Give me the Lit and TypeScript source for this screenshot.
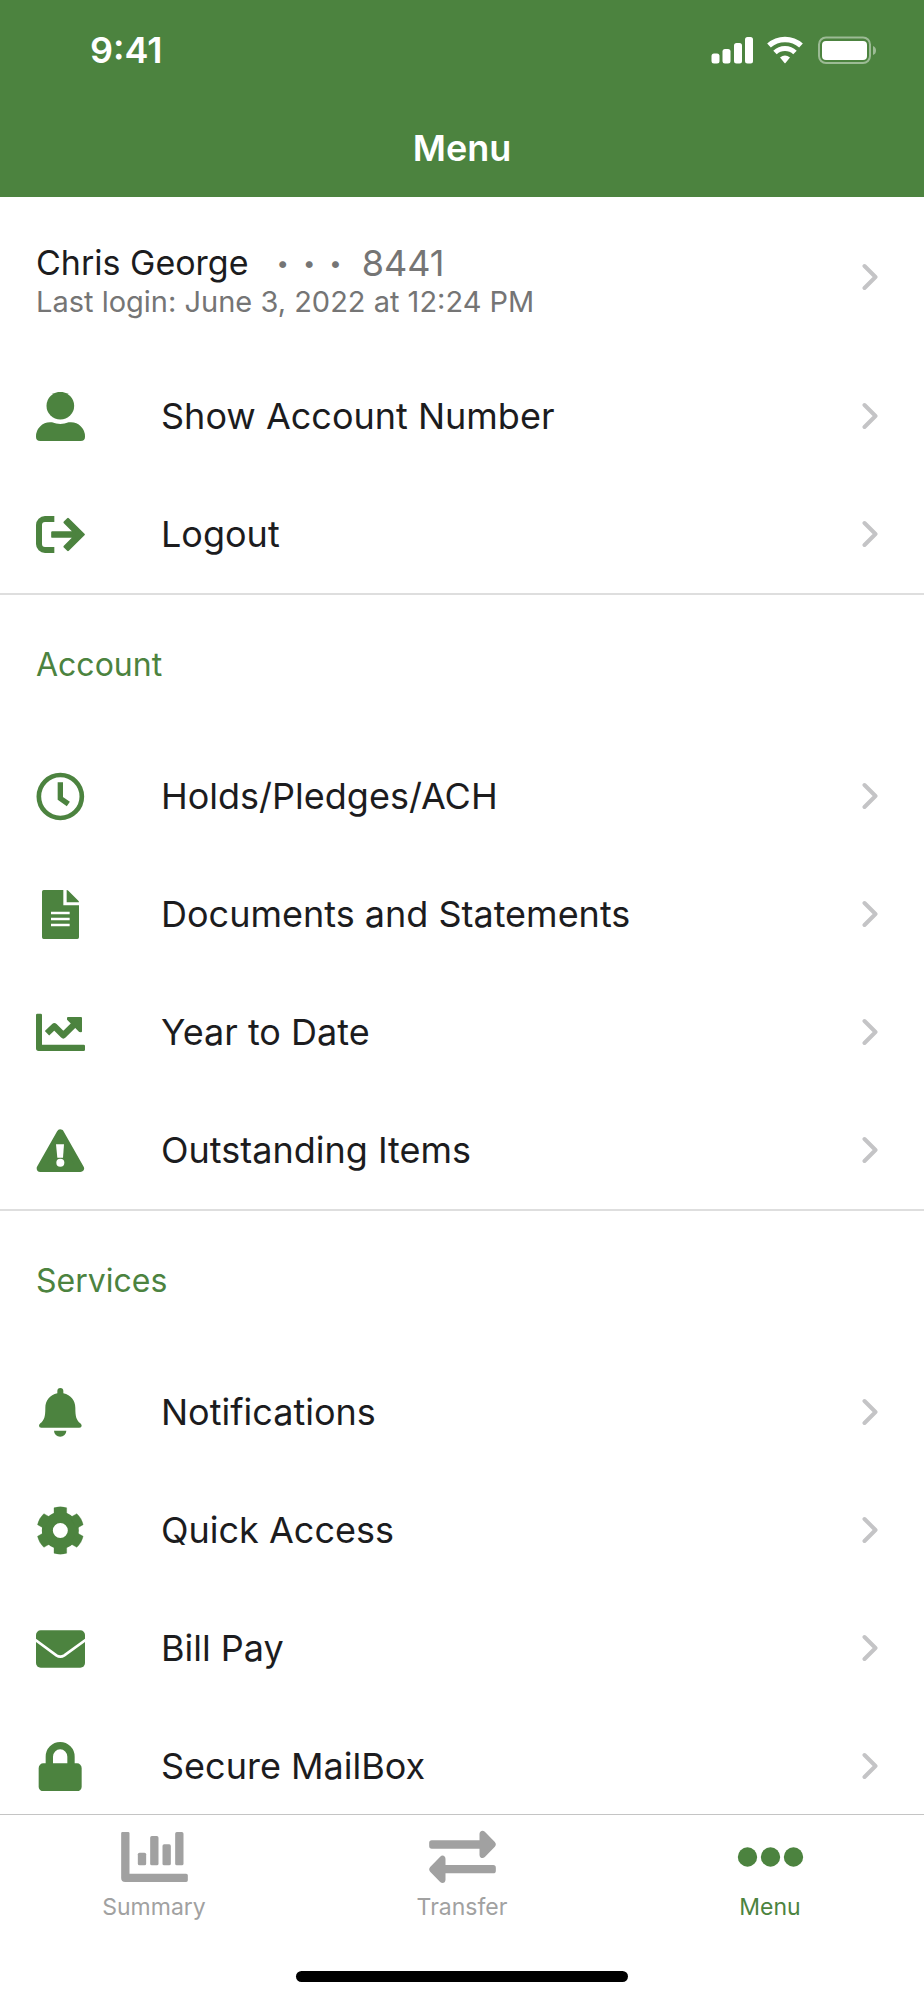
import { LitElement, html, svg, css, type SVGTemplateResult } from "lit";
import { customElement, property } from "lit/decorators.js";

const ARROW = "M8 31H151V12C151 3 160 -1 167 5L197 36Q203 43 197 50L167 81C160 88 151 83 151 74V56H8Q0 56 0 48V39Q0 31 8 31Z";

const ICONS: Record<string, SVGTemplateResult> = {
  user: svg`<circle cx="73" cy="41" r="41.5"/><path d="M42 91H48Q73 101 98 91H105A42 42 0 0 1 147 133V135Q147 147 134 147H13Q0 147 0 135V133A42 42 0 0 1 42 91Z"/>`,
  logout: svg`<path d="M55 27H27A18 18 0 0 0 9 45V102A18 18 0 0 0 27 120H55" fill="none" stroke="currentColor" stroke-width="18"/><path d="M96 27 143 73.500 96 120 86 110 116 80H49V67H116L86 37Z" stroke="currentColor" stroke-width="7" stroke-linejoin="round"/>`,
  clock: svg`<circle cx="73" cy="73.500" r="64.500" fill="none" stroke="currentColor" stroke-width="14"/><path d="M73 31V79L97 96" fill="none" stroke="currentColor" stroke-width="16"/>`,
  document: svg`<path d="M23 0H82V46H129V142Q129 147 124 147H23Q18 147 18 142V5Q18 0 23 0ZM45 65V73H101V65ZM45 83V91H101V83ZM45 101V109H101V101Z" fill-rule="evenodd"/><path d="M92 0Q95 0 97 2L127 32Q129 34 129 37H92Z"/>`,
  trend: svg`<path d="M0 21Q0 17 4 17H14Q18 17 18 21V110H143Q147 110 147 114V125Q147 129 143 129H8Q0 129 0 121Z"/><path d="M33 76 55 55 82 82 120 44" fill="none" stroke="currentColor" stroke-width="19" stroke-linejoin="round"/><path d="M96 30H135V70L131 69 96 34Z" stroke="currentColor" stroke-width="6" stroke-linejoin="round"/>`,
  warning: svg`<path d="M73 21 133 127H13Z" stroke="currentColor" stroke-width="22" stroke-linejoin="round"/><path d="M60 55H84L81 95H64Z" fill="#fff"/><circle cx="73" cy="110" r="12" fill="#fff"/>`,
  bell: svg`<path d="M73 0A9 9 0 0 1 82 9V16C105 21 118 38 118 60C118 85 121 97 133 106Q137 110 137 113Q137 119 130 119H16Q9 119 9 113Q9 110 13 106C25 97 28 85 28 60C28 38 41 21 64 16V9A9 9 0 0 1 73 0Z"/><path d="M54 128H91A18.500 18.500 0 0 1 54 128Z"/>`,
  gear: svg`<g transform="translate(73 73.500)"><circle r="39" fill="none" stroke="currentColor" stroke-width="33"/>${[0, 60, 120, 180, 240, 300].map(
    (a) => svg`<path transform="rotate(${a})" d="M-19 -68Q0 -74 19 -68V-45H-19Z" stroke="currentColor" stroke-width="1"/>`
  )}</g>`,
  mail: svg`<rect y="19" width="147" height="112" rx="14"/><path d="M-4 46 61 94Q73 102 85 94L151 46" fill="none" stroke="#fff" stroke-width="8"/>`,
  lock: svg`<rect x="8" y="64" width="129" height="84" rx="14"/><path d="M40 70V44A32.500 33 0 0 1 105 44V70" fill="none" stroke="currentColor" stroke-width="22"/>`,
  summary: svg`<path d="M0 10Q0 6 4 6H21Q25 6 25 10V131H195Q200 131 200 136V151Q200 156 195 156H12Q0 156 0 144Z"/><rect x="50" y="68" width="25" height="38" rx="5"/><rect x="87" y="18" width="25" height="88" rx="5"/><rect x="124" y="43" width="25" height="63" rx="5"/><rect x="162" y="6" width="25" height="100" rx="5"/>`,
  transfer: svg`<path d=${ARROW}/><path transform="rotate(180 100 80.500)" d=${ARROW}/>`,
  more: svg`<circle cx="31" cy="81" r="29"/><circle cx="100" cy="81" r="29"/><circle cx="169" cy="81" r="29"/>`,
};

const GROUPS = [
  {
    title: "Account",
    items: [
      ["clock", "Holds/Pledges/ACH"],
      ["document", "Documents and Statements"],
      ["trend", "Year to Date"],
      ["warning", "Outstanding Items"],
    ],
  },
  {
    title: "Services",
    items: [
      ["bell", "Notifications"],
      ["gear", "Quick Access"],
      ["mail", "Bill Pay"],
      ["lock", "Secure MailBox"],
    ],
  },
];

const chevron = html`<svg width="16" height="28" viewBox="0 0 16 28" fill="none" stroke="#c4c4c6" stroke-width="4" stroke-linecap="round" stroke-linejoin="round" aria-hidden="true"><path d="M2.500 3 13.500 14 2.500 25"/></svg>`;

@customElement("menu-row")
class MenuRow extends LitElement {
  @property() icon = "";
  @property() label = "";

  static styles = css`
    :host {
      display: block;
    }
    .row {
      display: flex;
      align-items: center;
      height: 118px;
      padding: 0 46px 0 36px;
      color: #1c1c1e;
      text-decoration: none;
    }
    .icon {
      width: 49px;
      height: 49px;
      margin-right: 76px;
      color: #4c833f;
      fill: currentColor;
    }
    .label {
      flex: 1;
      font-size: 36px;
      line-height: 44px;
    }
  `;

  render() {
    return html`<a class="row" href="#">
      <svg class="icon" viewBox="0 0 147 147" aria-hidden="true">${ICONS[this.icon]}</svg>
      <span class="label">${this.label}</span>
      ${chevron}
    </a>`;
  }
}

@customElement("tab-item")
class TabItem extends LitElement {
  @property() icon = "";
  @property() label = "";
  @property({ type: Boolean, reflect: true }) active = false;

  static styles = css`
    :host {
      display: block;
      flex: 1;
      color: #a1a1a1;
    }
    :host([active]) {
      color: #4c833f;
    }
    .tab {
      display: flex;
      flex-direction: column;
      align-items: center;
      gap: 9px;
      padding-top: 15px;
      color: inherit;
      text-decoration: none;
      font-size: 23px;
      line-height: 28px;
    }
    .icon {
      width: 67px;
      height: 54px;
      fill: currentColor;
    }
  `;

  render() {
    return html`<a class="tab" href="#">
      <svg class="icon" viewBox="0 0 200 162" aria-hidden="true">${ICONS[this.icon]}</svg>
      <span>${this.label}</span>
    </a>`;
  }
}

@customElement("app-root")
class AppRoot extends LitElement {
  static styles = css`
    :host {
      display: flex;
      flex-direction: column;
      height: 100vh;
      background: #fff;
      color: #1c1c1e;
      font-family: Inter, "Liberation Sans", sans-serif;
    }
    .header {
      background: #4c833f;
      color: #fff;
    }
    .status {
      display: flex;
      align-items: center;
      justify-content: space-between;
      height: 100px;
      padding: 0 48px 0 90px;
    }
    .time {
      font-size: 36px;
      font-weight: 600;
    }
    .title {
      margin: 0;
      padding: 26px 0 27px;
      font-size: 36px;
      font-weight: 600;
      line-height: 44px;
      text-align: center;
    }
    .content {
      flex: 1;
      min-height: 0;
      overflow-y: auto;
      scrollbar-width: none;
    }
    .profile {
      display: flex;
      align-items: center;
      justify-content: space-between;
      height: 160px;
      padding: 0 46px 0 36px;
      color: inherit;
      text-decoration: none;
    }
    .summary {
      padding-top: 8px;
    }
    .who {
      display: flex;
      align-items: center;
      font-size: 34px;
      line-height: 42px;
    }
    .dots {
      display: flex;
      gap: 14px;
      margin: 0 20px 0 28px;
      color: #757575;
      font-size: 22px;
    }
    .digits {
      color: #757575;
      font-size: 36px;
    }
    .login {
      color: #757575;
      font-size: 29px;
      line-height: 36px;
    }
    .group {
      border-top: 2px solid #dedede;
    }
    .heading {
      margin: 0;
      padding: 48px 36px 50px;
      color: #4c833f;
      font-size: 32px;
      font-weight: 400;
      line-height: 44px;
    }
    .footer {
      border-top: 1px solid #c4c4c4;
      background: #fff;
    }
    .tabs {
      display: flex;
      height: 156px;
    }
    .home {
      width: 36%;
      height: 11px;
      margin: 0 auto 18px;
      border-radius: 6px;
      background: #000;
    }
  `;

  render() {
    return html`
      <header class="header">
        <div class="status">
          <span class="time">9:41</span>
          <svg width="166" height="28" viewBox="0 0 166 28" fill="#fff" aria-hidden="true">
            <rect x="1.500" y="17.500" width="8" height="10" rx="2.500"/>
            <rect x="12.500" y="13" width="8" height="14.500" rx="2.500"/>
            <rect x="24" y="7" width="8" height="20.500" rx="2.500"/>
            <rect x="35" y="1" width="8" height="26.500" rx="2.500"/>
            <g fill="none" stroke="#fff">
              <path d="M59 9.500A24 24 0 0 1 91 9.500" stroke-width="5.500"/>
              <path d="M65 16.500A14.500 14.500 0 0 1 85 16.500" stroke-width="5"/>
            </g>
            <path d="M70 21.500Q75 17.500 80 21.500L75.500 27Q75 27.500 74.500 27Z"/>
            <rect x="109" y="1.500" width="51" height="25.500" rx="7" fill="none" stroke="#fff" stroke-opacity=".45" stroke-width="2"/>
            <rect x="112" y="5" width="45" height="19" rx="4"/>
            <path d="M163 10Q166 11 166 14.500T163 19Z" fill-opacity=".45"/>
          </svg>
        </div>
        <h1 class="title">Menu</h1>
      </header>
      <main class="content">
        <a class="profile" href="#">
          <div class="summary">
            <div class="who">
              <span>Chris George</span>
              <span class="dots"><span>•</span><span>•</span><span>•</span></span>
              <span class="digits">8441</span>
            </div>
            <div class="login">Last login: June 3, 2022 at 12:24 PM</div>
          </div>
          ${chevron}
        </a>
        <menu-row icon="user" label="Show Account Number"></menu-row>
        <menu-row icon="logout" label="Logout"></menu-row>
        ${GROUPS.map(
          (g) => html`<section class="group">
            <h2 class="heading">${g.title}</h2>
            ${g.items.map(([icon, label]) => html`<menu-row icon=${icon} label=${label}></menu-row>`)}
          </section>`
        )}
      </main>
      <footer class="footer">
        <nav class="tabs">
          <tab-item icon="summary" label="Summary"></tab-item>
          <tab-item icon="transfer" label="Transfer"></tab-item>
          <tab-item icon="more" label="Menu" active></tab-item>
        </nav>
        <div class="home"></div>
      </footer>
    `;
  }
}
